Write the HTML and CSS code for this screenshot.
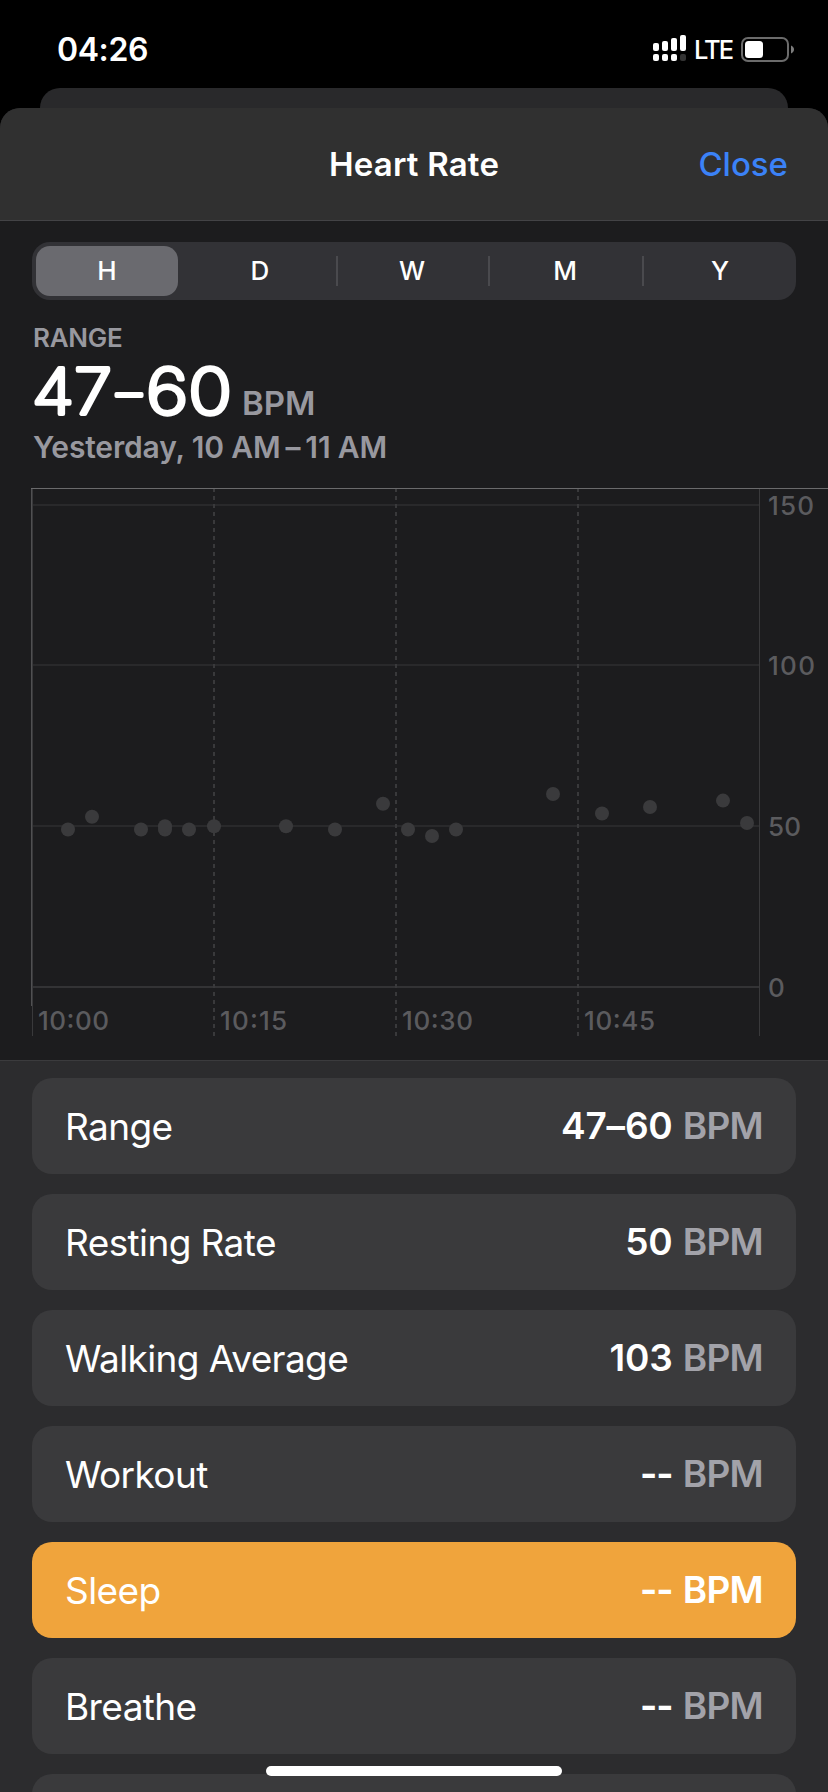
FILE: index.html
```html
<!DOCTYPE html>
<html lang="en">
  <head>
    <meta charset="UTF-8" />
    <meta name="viewport" content="width=device-width, initial-scale=1.0" />
    <title>Heart Rate</title>
    <link rel="stylesheet" href="styles.css">
  </head>
  <body>
    <div class="status-bar">
      <span class="time">04:26</span>
      <div class="status-icons">
        <svg class="signal" width="33" height="26" viewBox="0 0 33 26">
          <g fill="#fff">
            <rect x="0" y="8" width="6" height="8" rx="2" />
            <rect x="9" y="6" width="6" height="10" rx="2" />
            <rect x="18" y="3" width="6" height="13" rx="2" />
            <rect x="27" y="0" width="6" height="16" rx="2" />
            <rect x="0" y="19" width="6" height="7" rx="2" />
            <rect x="9" y="19" width="6" height="7" rx="2" />
            <rect x="18" y="19" width="6" height="7" rx="2" />
          </g>
          <rect x="27" y="19" width="6" height="7" rx="2" fill="#333" />
        </svg>
        <span class="network">LTE</span>
        <svg class="battery" width="53" height="25" viewBox="0 0 53 25">
          <rect x="1" y="1" width="46" height="23" rx="6" fill="none" stroke="#6b6b6b" stroke-width="2" />
          <rect x="4" y="4" width="18" height="17" rx="3.5" fill="#fff" />
          <path d="M50 8.5c4 1.5 4 6.500 0 8z" fill="#7c7c7c" />
        </svg>
      </div>
    </div>
    <div class="back-sheet"></div>
    <div class="sheet">
      <header class="header">
        <h1>Heart Rate</h1>
        <a class="close">Close</a>
      </header>

      <div class="overview">
        <div class="segments">
          <span class="segment active">H</span>
          <span class="segment wide">D</span>
          <span class="segment line">W</span>
          <span class="segment line">M</span>
          <span class="segment line wide">Y</span>
        </div>
        <div class="summary">
          <div class="caption">RANGE</div>
          <div class="reading">
            <svg class="reading-value" width="204" height="84" viewBox="0 0 204 84">
              <text><tspan x="0" y="63.5" textLength="80" lengthAdjust="spacingAndGlyphs">47</tspan><tspan class="reading-dash" x="97" y="60.5">–</tspan><tspan x="114" y="63.5" textLength="86" lengthAdjust="spacingAndGlyphs">60</tspan></text>
            </svg>
            <span class="reading-unit">BPM</span>
          </div>
          <div class="period">Yesterday, 10 AM<span class="dash">–</span>11 AM</div>
        </div>
      </div>

      <svg class="chart" width="828" height="572" viewBox="0 488 828 572">
        <!-- horizontal grid -->
        <g fill="#29292b">
          <rect x="32" y="504" width="728" height="2" />
          <rect x="32" y="664" width="728" height="2" />
          <rect x="32" y="825" width="728" height="2" />
        </g>
        <rect x="32" y="986" width="728" height="2" fill="#333335" />
        <!-- quarter hours -->
        <g stroke="#39393b" stroke-width="2" stroke-dasharray="4 4">
          <path d="M214 488V1036" />
          <path d="M396 488V1036" />
          <path d="M578 488V1036" />
        </g>
        <rect x="32" y="488" width="1" height="548" fill="#39393b" />
        <rect x="31" y="488" width="1" height="518" fill="#505052" />
        <rect x="759" y="488" width="1" height="548" fill="#39393b" />
        <rect x="31" y="488" width="797" height="1" fill="#6a6a6c" />
        <g fill="#3a3a3c">
          <circle cx="68" cy="829.5" r="7" />
          <circle cx="92" cy="816.7" r="7" />
          <circle cx="141" cy="829.5" r="7" />
          <circle cx="165" cy="829.5" r="7" />
          <circle cx="165" cy="826.3" r="7" />
          <circle cx="189" cy="829.5" r="7" />
          <circle cx="214" cy="826.3" r="7" />
          <circle cx="286" cy="826.3" r="7" />
          <circle cx="335" cy="829.5" r="7" />
          <circle cx="383" cy="803.8" r="7" />
          <circle cx="408" cy="829.5" r="7" />
          <circle cx="432" cy="836" r="7" />
          <circle cx="456" cy="829.5" r="7" />
          <circle cx="553" cy="794" r="7" />
          <circle cx="602" cy="813.5" r="7" />
          <circle cx="650" cy="807" r="7" />
          <circle cx="723" cy="800.6" r="7" />
          <circle cx="747" cy="823" r="7" />
        </g>
        <g class="axis">
          <text x="768" y="515" textLength="46">150</text>
          <text x="768" y="675" textLength="47">100</text>
          <text x="768" y="836" textLength="33">50</text>
          <text x="768" y="997">0</text>
          <text x="38" y="1030" textLength="71">10:00</text>
          <text x="220" y="1030" textLength="67">10:15</text>
          <text x="402" y="1030" textLength="71">10:30</text>
          <text x="584" y="1030" textLength="71">10:45</text>
        </g>
      </svg>

      <div class="list">
        <div class="row"><span class="label">Range</span><span class="value">47–60 <span class="unit">BPM</span></span></div>
        <div class="row"><span class="label">Resting Rate</span><span class="value">50 <span class="unit">BPM</span></span></div>
        <div class="row"><span class="label">Walking Average</span><span class="value">103 <span class="unit">BPM</span></span></div>
        <div class="row"><span class="label">Workout</span><span class="value"><span class="empty">--</span> <span class="unit">BPM</span></span></div>
        <div class="row selected"><span class="label">Sleep</span><span class="value"><span class="empty">--</span> <span class="unit">BPM</span></span></div>
        <div class="row"><span class="label">Breathe</span><span class="value"><span class="empty">--</span> <span class="unit">BPM</span></span></div>
        <div class="row"></div>
      </div>
    </div>
    <div class="home-indicator"></div>
  </body>
</html>
```
FILE: styles.css
```css
* {
  box-sizing: border-box;
}
body {
  margin: 0;
  width: 828px;
  height: 1792px;
  overflow: hidden;
  position: relative;
  background: #000;
  color: #fff;
  font-family: Inter, "Liberation Sans", sans-serif;
}
.status-bar {
  height: 88px;
  padding: 0 34px 0 57px;
  display: flex;
  justify-content: space-between;
}
.time {
  margin-top: 30px;
  font-size: 32px;
  line-height: 40px;
  font-weight: 600;
  letter-spacing: -0.4px;
}
.status-icons {
  display: flex;
  align-items: flex-start;
}
.signal {
  margin-top: 35px;
}
.network {
  margin: 34px 9px 0 8px;
  width: 38px;
  font-size: 25.5px;
  line-height: 32px;
  font-weight: 450;
  letter-spacing: -2px;
}
.battery {
  margin-top: 37px;
}
.back-sheet {
  height: 20px;
  margin: 0 40px;
  background: #29292b;
  border-radius: 20px 20px 0 0;
}
.sheet {
  height: 1684px;
  overflow: hidden;
  background: #1c1c1e;
  border-radius: 20px 20px 0 0;
}
.header {
  height: 113px;
  padding: 0 40px;
  display: grid;
  grid-template-columns: 1fr auto 1fr;
  align-items: center;
  background: #303030;
  border-bottom: 1px solid #434346;
}
.header h1 {
  grid-column: 2;
  margin: 0;
  font-size: 33px;
  line-height: 40px;
  font-weight: 600;
  letter-spacing: 0.2px;
}
.close {
  justify-self: end;
  color: #3b82f7;
  font-size: 33px;
  line-height: 40px;
  font-weight: 500;
}
.overview {
  height: 267px;
  padding: 21px 32px 0;
}
.segments {
  height: 58px;
  padding: 4px;
  display: grid;
  grid-template-columns: 142px 158px 152px 154px 150px;
  background: #323236;
  border-radius: 18px;
}
.segment {
  padding-bottom: 1px;
  display: flex;
  align-items: center;
  justify-content: center;
  font-size: 26px;
  font-weight: 450;
}
.segment.active {
  background: #6a6a6f;
  border-radius: 14px;
  font-weight: 500;
}
.segment.line {
  background: linear-gradient(#4a4a4e, #4a4a4e) left center / 2px 30px no-repeat;
}
.segment.wide {
  padding-left: 6px;
}
.summary {
  color: #98989f;
  font-weight: 600;
}
.caption {
  margin: 22px 0 0 1px;
  font-size: 26px;
  line-height: 32px;
  letter-spacing: -0.3px;
}
.reading {
  height: 60px;
  margin-top: 8px;
  display: flex;
  align-items: flex-start;
}
.reading-value {
  flex: none;
  margin-top: -12px;
}
/* thin digits with a round-joined stroke give the rounded numerals */
.reading-value text {
  fill: #fff;
  stroke: #fff;
  stroke-width: 4px;
  stroke-linejoin: round;
  font-size: 63px;
  font-weight: 200;
}
.reading-value .reading-dash {
  font-size: 50px;
  text-anchor: middle;
}
.reading-unit {
  margin: 21px 0 0 6px;
  font-size: 33px;
  line-height: 40px;
}
.period {
  margin: 7px 0 0 1px;
  font-size: 30px;
  line-height: 36px;
  letter-spacing: -0.15px;
}
.dash {
  margin: 0 5px;
}
.chart {
  display: block;
}
.axis {
  fill: #5b5b5e;
  font-size: 26px;
  font-weight: 500;
}
.list {
  height: 732px;
  padding: 17px 32px 0;
  background: #2c2c2e;
  border-top: 1px solid #3b3b3d;
}
.row {
  height: 96px;
  margin-bottom: 20px;
  padding: 0 33px;
  display: flex;
  align-items: center;
  justify-content: space-between;
  background: #3a3a3c;
  border-radius: 20px;
}
.label {
  margin-top: 1px;
  font-size: 37px;
  line-height: 44px;
  letter-spacing: -0.6px;
}
.value {
  font-size: 37px;
  line-height: 44px;
  font-weight: 600;
  letter-spacing: -0.2px;
}
.empty {
  font-weight: 700;
  letter-spacing: -1px;
}
.unit {
  margin-left: 1px;
  color: #a2a2a9;
  font-weight: 600;
  letter-spacing: -0.7px;
}
.row.selected {
  background: #f0a43c;
}
.row.selected .unit {
  color: #fff;
}
.home-indicator {
  position: absolute;
  left: 266px;
  top: 1766px;
  width: 296px;
  height: 10px;
  background: #fff;
  border-radius: 5px;
}
```
